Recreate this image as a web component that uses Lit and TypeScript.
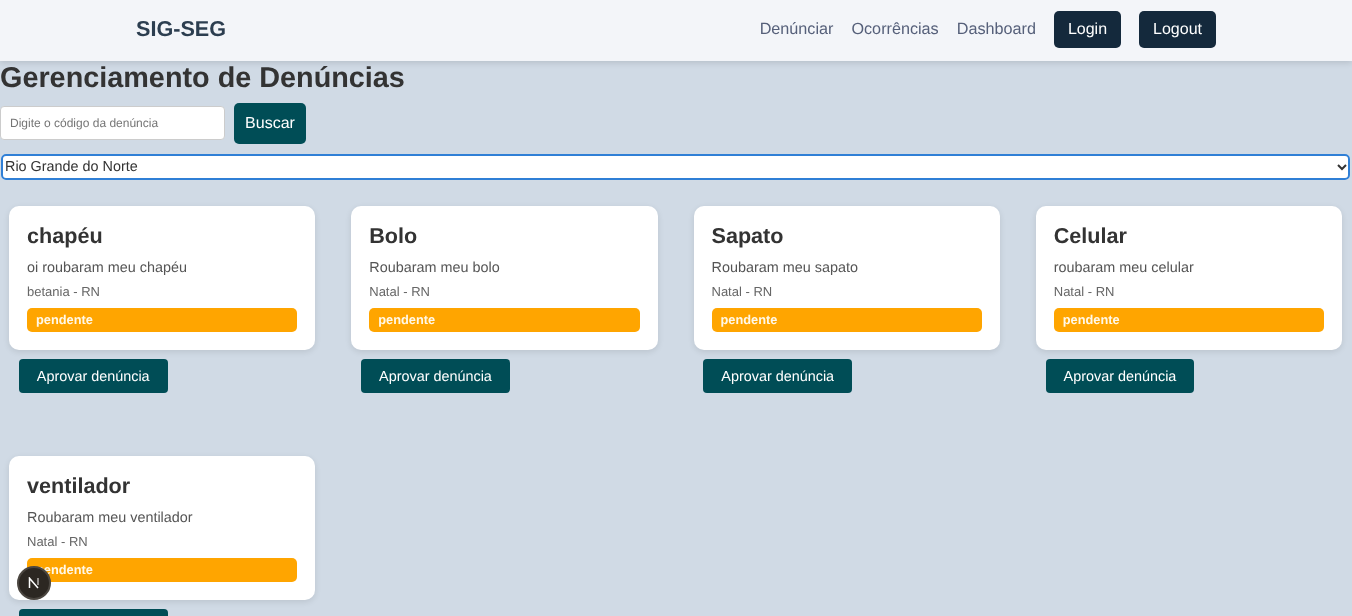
import { LitElement, css, html } from 'lit';
import { customElement } from 'lit/decorators.js';

interface Denuncia {
  titulo: string;
  descricao: string;
  local: string;
  status: string;
}

const DENUNCIAS: Denuncia[] = [
  { titulo: 'chapéu', descricao: 'oi roubaram meu chapéu', local: 'betania - RN', status: 'pendente' },
  { titulo: 'Bolo', descricao: 'Roubaram meu bolo', local: 'Natal - RN', status: 'pendente' },
  { titulo: 'Sapato', descricao: 'Roubaram meu sapato', local: 'Natal - RN', status: 'pendente' },
  { titulo: 'Celular', descricao: 'roubaram meu celular', local: 'Natal - RN', status: 'pendente' },
  { titulo: 'ventilador', descricao: 'Roubaram meu ventilador', local: 'Natal - RN', status: 'pendente' },
];

@customElement('app-root')
export class AppRoot extends LitElement {
  static styles = css`
    :host {
      display: block;
      height: 100vh;
      overflow: hidden;
      position: relative;
      background: #d0dae5;
      font-family: 'Liberation Sans', Arial, sans-serif;
      color: #333;
      text-rendering: geometricPrecision;
    }

    .navbar {
      background: #f3f5f9;
      height: 61px;
      box-shadow: 0 2px 6px rgba(0, 0, 0, 0.12);
      position: relative;
    }

    .navbar-inner {
      max-width: 1080px;
      height: 100%;
      margin: 0 auto;
      display: flex;
      align-items: center;
      justify-content: space-between;
      padding-bottom: 2px;
      box-sizing: border-box;
      will-change: transform;
    }

    .logo {
      font-size: 21.6px;
      font-weight: 700;
      color: #2c3e50;
      margin-bottom: 2px;
    }

    .links {
      display: flex;
      align-items: center;
      gap: 18px;
    }

    .links a {
      font-size: 16.2px;
      color: #56607a;
      text-decoration: none;
    }

    .links button {
      height: 37px;
      padding: 0 14px;
      border: none;
      border-radius: 5px;
      background: #14293c;
      color: #fff;
      font: 16px 'Liberation Sans', Arial, sans-serif;
      text-rendering: geometricPrecision;
    }

    main {
      will-change: transform;
    }

    h1 {
      margin: 0;
      font-size: 28.8px;
      line-height: 35px;
      font-weight: 700;
      color: #333;
    }

    .search {
      display: flex;
      align-items: flex-start;
      gap: 9px;
      margin-top: 7px;
    }

    .search input {
      width: 225px;
      height: 34px;
      margin-top: 3px;
      box-sizing: border-box;
      padding: 0 9px;
      border: 1px solid #ccc;
      border-radius: 4px;
      background: #fff;
      font: 12px 'Liberation Sans', Arial, sans-serif;
      text-rendering: geometricPrecision;
    }

    .search input::placeholder {
      color: #757575;
    }

    .search button {
      width: 72px;
      height: 41px;
      border: none;
      border-radius: 5px;
      background: #004d56;
      color: #fff;
      font: 16px 'Liberation Sans', Arial, sans-serif;
      text-rendering: geometricPrecision;
    }

    .estado {
      display: block;
      width: calc(100% - 1px);
      height: 28px;
      margin: 9px 0 -1px;
      box-sizing: border-box;
      padding: 0;
      border: 1px solid transparent;
      background-clip: padding-box;
      border-radius: 6px;
      outline: 2px solid #2f7fd6;
      outline-offset: -3px;
      background-color: #fff;
      color: #333;
      font: 14.4px 'Liberation Sans', Arial, sans-serif;
      text-rendering: geometricPrecision;
    }

    .grid {
      display: grid;
      grid-template-columns: repeat(4, 1fr);
      column-gap: 36px;
      padding: 0 10px 0 9px;
      margin-top: 26px;
    }

    .item {
      height: 250px;
    }

    .card {
      background: #fff;
      border-radius: 10px;
      padding: 18px;
      height: 144px;
      box-sizing: border-box;
      box-shadow: 0 2px 6px rgba(0, 0, 0, 0.1);
    }

    .card h3 {
      margin: 0;
      font-size: 21.6px;
      line-height: 23px;
      font-weight: 700;
      color: #333;
    }

    .descricao {
      margin: 13px 0 0;
      font-size: 14.4px;
      line-height: 17px;
      color: #555;
    }

    .local {
      margin: 7px 0 0;
      font-size: 13px;
      line-height: 15px;
      color: #666;
    }

    .status {
      margin-top: 9px;
      height: 24px;
      line-height: 23px;
      padding-left: 9px;
      border-radius: 5px;
      background: #ffa500;
      color: #fff8e8;
      font-size: 12.8px;
      font-weight: 700;
    }

    .aprovar {
      display: block;
      margin: 9px 0 0 9.9px;
      width: 148.7px;
      height: 34px;
      padding: 1px 0 0;
      border: none;
      border-radius: 4px;
      background: #004d56;
      color: #fff;
      font: 14.4px 'Liberation Sans', Arial, sans-serif;
      text-rendering: geometricPrecision;
    }

    .dev-badge {
      position: absolute;
      left: 17px;
      top: 566px;
      width: 34px;
      height: 34px;
      box-sizing: border-box;
      border-radius: 50%;
      background: #2c2722;
      border: 2px solid #4b4640;
      display: flex;
      align-items: center;
      justify-content: center;
    }
  `;

  render() {
    return html`
      <header class="navbar">
        <div class="navbar-inner">
          <span class="logo">SIG-SEG</span>
          <nav class="links">
            <a href="#">Denúnciar</a>
            <a href="#">Ocorrências</a>
            <a href="#">Dashboard</a>
            <button>Login</button>
            <button>Logout</button>
          </nav>
        </div>
      </header>
      <main>
        <h1>Gerenciamento de Denúncias</h1>
        <div class="search">
          <input type="text" placeholder="Digite o código da denúncia" />
          <button>Buscar</button>
        </div>
        <select class="estado">
          <option>Rio Grande do Norte</option>
        </select>
        <div class="grid">
          ${DENUNCIAS.map(
            (d) => html`
              <div class="item">
                <div class="card">
                  <h3>${d.titulo}</h3>
                  <p class="descricao">${d.descricao}</p>
                  <p class="local">${d.local}</p>
                  <div class="status">${d.status}</div>
                </div>
                <button class="aprovar">Aprovar denúncia</button>
              </div>
            `
          )}
        </div>
      </main>
      <div class="dev-badge">
        <svg width="12" height="12" viewBox="0 0 12 12" fill="none">
          <path d="M1.5 11V1.2L10 11" stroke="#fff" stroke-width="1.5" />
          <path d="M10 1v7" stroke="#b5b2af" stroke-width="1.5" />
        </svg>
      </div>
    `;
  }
}
